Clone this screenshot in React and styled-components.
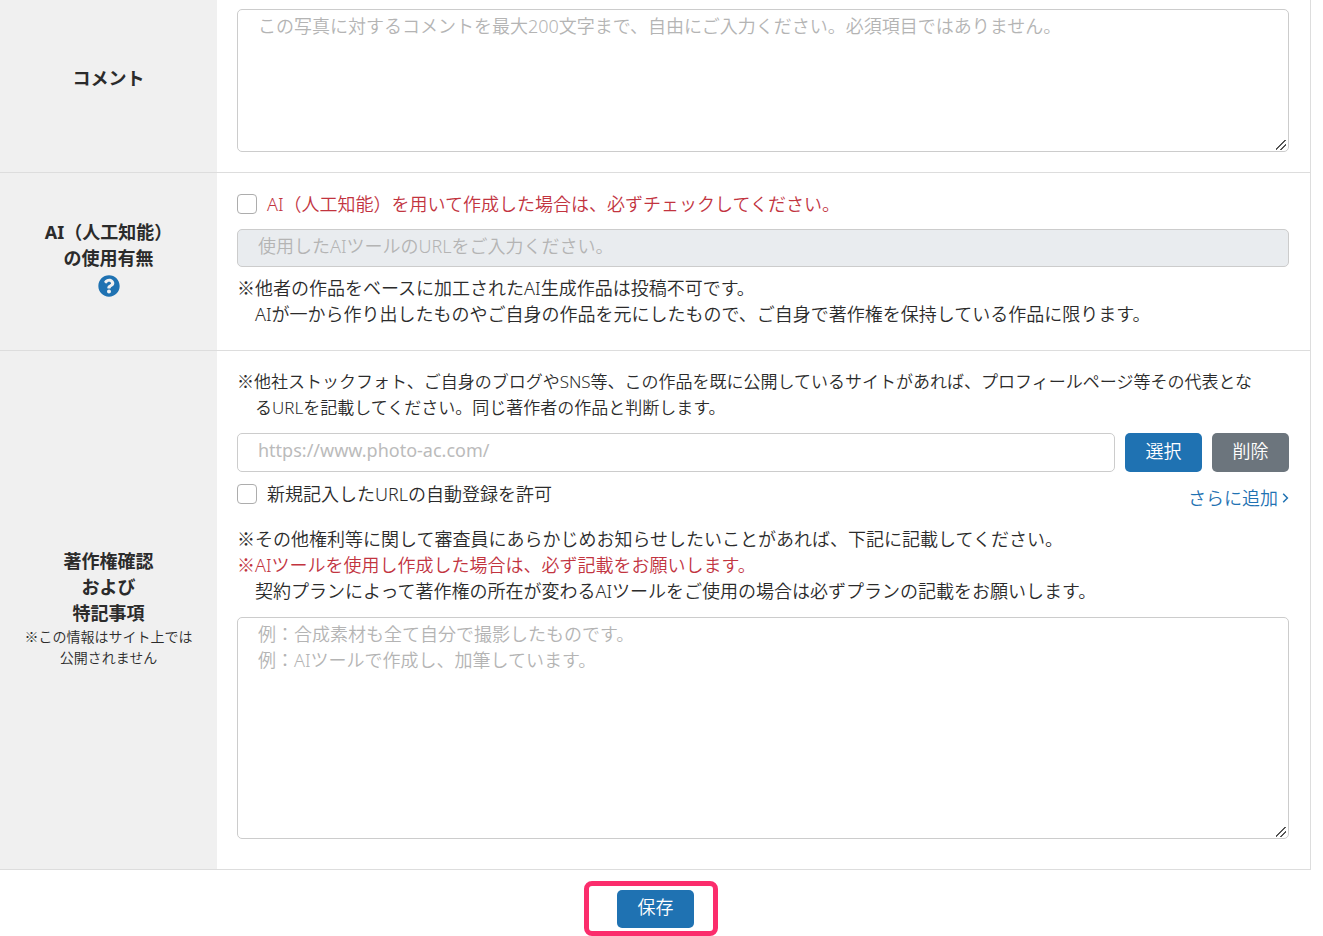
import React, {useState} from 'react';
import styled, {createGlobalStyle} from 'styled-components';
import {FaQuestionCircle} from 'react-icons/fa';

const App = () => {
    const [usesAi, setUsesAi] = useState(false);
    const [autoRegister, setAutoRegister] = useState(false);

    return (
        <>
            <GlobalStyle/>
            <Form onSubmit={e => e.preventDefault()}>
                <Table>
                    <Row>
                        <Head $bottom={16}>
                            <Title as='label' htmlFor='comment'>コメント</Title>
                        </Head>
                        <Body $top={9} $bottom={20}>
                            <TextArea
                                id='comment'
                                $height={143}
                                placeholder='この写真に対するコメントを最大200文字まで、自由にご入力ください。必須項目ではありません。'
                            />
                        </Body>
                    </Row>
                    <Row>
                        <Head $bottom={4}>
                            <Title>AI（人工知能）<br/>の使用有無</Title>
                            <Help type='button' aria-label='ヘルプ'><FaQuestionCircle/></Help>
                        </Head>
                        <Body $top={18} $bottom={23}>
                            <Check $danger>
                                <input type='checkbox' checked={usesAi} onChange={() => setUsesAi(!usesAi)}/>
                                AI（人工知能）を用いて作成した場合は、必ずチェックしてください。
                            </Check>
                            <AiUrl
                                type='text'
                                disabled={!usesAi}
                                aria-label='AIツールのURL'
                                placeholder='使用したAIツールのURLをご入力ください。'
                            />
                            <Note><Mark>※</Mark>他者の作品をベースに加工されたAI生成作品は投稿不可です。</Note>
                            <Note $indent>
                                AIが一から作り出したものやご自身の作品を元にしたもので、ご自身で著作権を保持している作品に限ります。
                            </Note>
                        </Body>
                    </Row>
                    <Row>
                        <Head $bottom={4}>
                            <Title>著作権確認<br/>および<br/>特記事項</Title>
                            <Small><Mark>※</Mark>この情報はサイト上では<br/>公開されません</Small>
                        </Head>
                        <Body $top={18} $bottom={30}>
                            <Note $dense>
                                <Mark>※</Mark>他社ストックフォト、ご自身のブログやSNS等、この作品を既に公開しているサイトがあれば、プロフィールページ等その代表とな
                            </Note>
                            <Note $dense $indent>
                                るURLを記載してください。同じ著作者の作品と判断します。
                            </Note>
                            <UrlLine>
                                <SiteUrl type='text' aria-label='サイトURL' placeholder='https://www.photo-ac.com/'/>
                                <Button type='button'>選択</Button>
                                <Button type='button' $gray>削除</Button>
                            </UrlLine>
                            <Options>
                                <Check>
                                    <input type='checkbox' checked={autoRegister} onChange={() => setAutoRegister(!autoRegister)}/>
                                    新規記入したURLの自動登録を許可
                                </Check>
                                <More href='#more'>
                                    さらに追加
                                    <svg width='7' height='10' viewBox='0 0 7 10' fill='none' stroke='currentColor' strokeWidth='1.5'>
                                        <path d='M1.2 0.8 L5.4 5 L1.2 9.2'/>
                                    </svg>
                                </More>
                            </Options>
                            <Note>
                                <Mark>※</Mark>その他権利等に関して審査員にあらかじめお知らせしたいことがあれば、下記に記載してください。
                            </Note>
                            <Note $danger><Mark>※</Mark>AIツールを使用し作成した場合は、必ず記載をお願いします。</Note>
                            <Note $indent>
                                契約プランによって著作権の所在が変わるAIツールをご使用の場合は必ずプランの記載をお願いします。
                            </Note>
                            <Remarks
                                $height={222}
                                aria-label='特記事項'
                                placeholder={'例：合成素材も全て自分で撮影したものです。\n例：AIツールで作成し、加筆しています。'}
                            />
                        </Body>
                    </Row>
                </Table>
                <Footer>
                    <Marked>
                        <SaveButton>保存</SaveButton>
                    </Marked>
                </Footer>
            </Form>
        </>
    );
};

const GlobalStyle = createGlobalStyle`
    *{
        box-sizing: border-box;
    }
    body{
        margin: 0;
        background: #fff;
        color: #2b2b2b;
    }
    body, input, textarea, button{
        font-family: 'Noto Sans', 'Noto Sans CJK JP', sans-serif;
        font-size: 18px;
        font-weight: 350;
        line-height: 26px;
    }
`;

const Form = styled.form`
    margin-right: 12px;
`;

const Table = styled.div`
    border-right: 1px solid #ddd;
`;

const Row = styled.div`
    display: grid;
    grid-template-columns: 217px 1fr;
    border-bottom: 1px solid #ddd;
`;

const Head = styled.div`
    display: flex;
    flex-direction: column;
    align-items: center;
    justify-content: center;
    padding-bottom: ${({$bottom}) => $bottom}px;
    background: #f0f0f0;
    text-align: center;
`;

const Title = styled.div`
    font-weight: 700;
`;

const Small = styled.div`
    font-size: 14px;
    line-height: 21px;
`;

/* full-width reference mark */
const Mark = styled.span`
    font-family: 'Noto Sans CJK JP', sans-serif;
    line-height: 1;
`;

const Help = styled.button`
    display: flex;
    padding: 4px;
    border: 0;
    background: none;
    color: #1f72b2;
    cursor: pointer;
    svg{
        font-size: 22px;
    }
`;

const Body = styled.div`
    min-width: 0;
    padding: ${({$top}) => $top}px 21px ${({$bottom}) => $bottom}px 20px;
`;

const Input = styled.input`
    display: block;
    width: 100%;
    min-width: 0;
    height: 39px;
    padding: 0 20px 5px;
    border: 1px solid #ccc;
    border-radius: 5px;
    background: #fff;
    color: #333;
    &::placeholder{
        color: #b4b4b4;
    }
    &:disabled{
        background: #e9ecef;
    }
`;

const AiUrl = styled(Input)`
    height: 38px;
    margin: 12px 0 8px;
`;

const SiteUrl = styled(Input)`
    font-weight: 400;
    &::placeholder{
        color: #bbb;
    }
`;

const TextArea = styled.textarea`
    display: block;
    width: 100%;
    height: ${({$height}) => $height}px;
    padding: 3px 20px;
    border: 1px solid #ccc;
    border-radius: 5px;
    color: #333;
    resize: vertical;
    &::placeholder{
        color: #b4b4b4;
    }
    &::-webkit-resizer{
        background: linear-gradient(
            135deg,
            transparent 42%, #555 42% 52%,
            transparent 52% 67%, #555 67% 77%,
            transparent 77%
        ) 3px 4px / 10px 10px no-repeat;
    }
`;

const Remarks = styled(TextArea)`
    margin-top: 13px;
`;

const Check = styled.label`
    display: flex;
    align-items: center;
    gap: 10px;
    color: ${({$danger}) => $danger ? '#c2343f' : 'inherit'};
    input{
        appearance: none;
        width: 20px;
        height: 20px;
        margin: 0;
        border: 1px solid #adadad;
        border-radius: 4px;
        background: #fff;
        &:checked{
            background: #1f72b2;
            box-shadow: inset 0 0 0 4px #fff;
        }
    }
`;

const Note = styled.p`
    margin: 0;
    padding-left: ${({$indent}) => $indent ? 18 : 0}px;
    font-size: ${({$dense}) => $dense ? 17 : 18}px;
    color: ${({$danger}) => $danger ? '#c2343f' : 'inherit'};
`;

const UrlLine = styled.div`
    display: flex;
    gap: 10px;
    margin-top: 12px;
`;

const Button = styled.button`
    flex: none;
    min-width: 77px;
    height: 39px;
    padding: 0 16px 4px;
    border: 0;
    border-radius: 5px;
    background: ${({$gray}) => $gray ? '#6c757d' : '#1f72b2'};
    color: #fff;
    cursor: pointer;
`;

const SaveButton = styled(Button)`
    display: block;
    height: 38px;
`;

const Options = styled.div`
    display: flex;
    justify-content: space-between;
    align-items: flex-start;
    padding: 9px 0 15px;
`;

const More = styled.a`
    display: flex;
    align-items: center;
    gap: 4px;
    margin-top: 4px;
    color: #1f72b2;
    text-decoration: none;
`;

const Footer = styled.div`
    display: flex;
    justify-content: center;
    padding: 20px 0 8px;
`;

/* pink highlight frame drawn around the save button */
const Marked = styled.div`
    position: relative;
    &::after{
        content: '';
        position: absolute;
        inset: -9px -24px -8px -33px;
        border: 5px solid #fb2d6c;
        border-radius: 8px;
        pointer-events: none;
    }
`;

export default App;
